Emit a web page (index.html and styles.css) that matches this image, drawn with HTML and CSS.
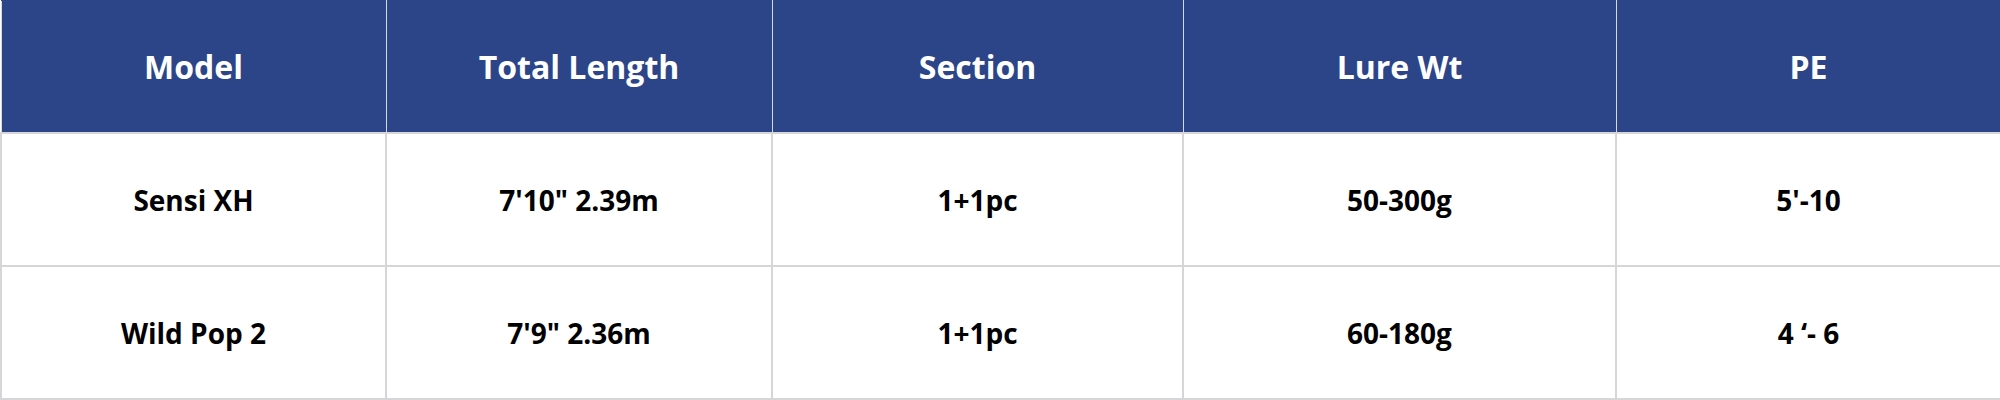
FILE: index.html
```html
<!DOCTYPE html>
<html>
<head>
<meta charset="utf-8">
<link rel="stylesheet" href="styles.css">
</head>
<body>
<table class="spec">
  <colgroup>
    <col class="c1"><col class="c2"><col class="c3"><col class="c4"><col class="c5">
  </colgroup>
  <thead>
    <tr><th>Model</th><th>Total Length</th><th>Section</th><th>Lure Wt</th><th>PE</th></tr>
  </thead>
  <tbody>
    <tr><td>Sensi XH</td><td>7'10" 2.39m</td><td>1+1pc</td><td>50-300g</td><td>5'-10</td></tr>
    <tr><td>Wild Pop 2</td><td>7'9" 2.36m</td><td>1+1pc</td><td>60-180g</td><td>4 ‘- 6</td></tr>
  </tbody>
</table>
</body>
</html>
```
FILE: styles.css
```css
html, body {
  margin: 0;
  padding: 0;
  background: #ffffff;
}
.spec {
  width: 2000px;
  border-collapse: collapse;
  table-layout: fixed;
  font-family: "Open Sans", "Liberation Sans", sans-serif;
}
.c1 { width: 385px; }
.c2 { width: 386px; }
.c3 { width: 411px; }
.c4 { width: 433px; }
.c5 { width: 385px; }
.spec th {
  height: 131px;
  background: #2c4588;
  color: #ffffff;
  font-size: 32px;
  font-weight: 700;
  text-align: center;
  vertical-align: middle;
  padding: 0;
  border: 1px solid #d5d8e0;
  border-top: 1px solid #2c4588;
}
.spec td {
  height: 131px;
  color: #000000;
  font-size: 28px;
  font-weight: 700;
  text-align: center;
  vertical-align: middle;
  padding: 0;
  border: 2px solid #d6d6d9;
}
```
